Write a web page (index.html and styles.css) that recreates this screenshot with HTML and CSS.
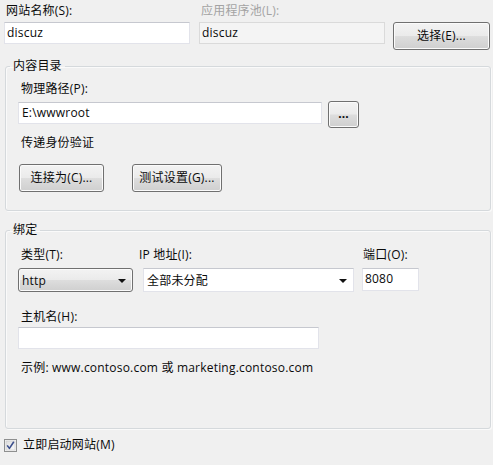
FILE: index.html
```html
<!DOCTYPE html>
<html lang="zh-CN">
<head>
<meta charset="utf-8">
<title>添加网站</title>
<link rel="stylesheet" href="styles.css">
</head>
<body>
<div class="window">
  <div class="toprow">
    <div class="field name-field">
      <div class="lbl">网站名称(S):</div>
      <div class="input">discuz</div>
    </div>
    <div class="field pool-field">
      <div class="lbl lbl-disabled">应用程序池(L):</div>
      <div class="input input-disabled">discuz</div>
    </div>
    <button class="btn btn-select">选择(E)...</button>
  </div>

  <fieldset class="group group-content">
    <legend>内容目录</legend>
    <div class="lbl lbl-path">物理路径(P):</div>
    <div class="path-row">
      <div class="input input-path">E:\wwwroot</div>
      <button class="btn btn-dots">...</button>
    </div>
    <div class="lbl lbl-auth">传递身份验证</div>
    <div class="btn-row">
      <button class="btn btn-connect">连接为(C)...</button>
      <button class="btn btn-test">测试设置(G)...</button>
    </div>
  </fieldset>

  <fieldset class="group group-binding">
    <legend>绑定</legend>
    <div class="bind-grid">
      <div class="lbl lbl-type">类型(T):</div>
      <div class="lbl lbl-ip">IP 地址(I):</div>
      <div class="lbl lbl-port">端口(O):</div>
      <div class="dropdown dropdown-type"><span>http</span><span class="arrow"></span></div>
      <div class="dropdown dropdown-ip"><span>全部未分配</span><span class="arrow"></span></div>
      <div class="input input-port">8080</div>
    </div>
    <div class="lbl lbl-host">主机名(H):</div>
    <div class="input input-host"></div>
    <div class="lbl lbl-example">示例: www.contoso.com 或 marketing.contoso.com</div>
  </fieldset>

  <div class="check-row">
    <svg class="checkbox" width="13" height="13" viewBox="0 0 13 13">
      <defs>
        <linearGradient id="cbg" x1="0" y1="0" x2="1" y2="1">
          <stop offset="0" stop-color="#dcdcdc"/>
          <stop offset="1" stop-color="#fbfbfb"/>
        </linearGradient>
      </defs>
      <rect x="0.5" y="0.5" width="12" height="12" fill="#f4f4f4" stroke="#8e8f8f"/>
      <rect x="2" y="2" width="9" height="9" fill="url(#cbg)" stroke="#c8c8c8" stroke-width="0.6"/>
      <path d="M3.2 6.4 L5.4 9.4 L9.8 2.8" fill="none" stroke="#3c4f8c" stroke-width="1.6" stroke-linejoin="round"/>
    </svg>
    <span class="check-label">立即启动网站(M)</span>
  </div>
</div>
</body>
</html>
```

FILE: styles.css
```css
html, body {
  margin: 0;
  padding: 0;
  background: #ffffff;
}

body {
  font-family: "Open Sans", "Noto Sans CJK SC", sans-serif;
  font-size: 12px;
  letter-spacing: 0.2px;
  color: #0a0a0a;
}

.window {
  width: 493px;
  height: 465px;
  background: #f0f0f0;
  box-sizing: border-box;
  overflow: hidden;
}

.lbl {
  line-height: 16px;
  height: 16px;
  white-space: nowrap;
}

.lbl-disabled {
  color: #a3a3a3;
}

/* Top row */
.toprow {
  display: flex;
  align-items: flex-start;
  padding: 3px 0 0 4px;
}

.field {
  display: flex;
  flex-direction: column;
}

.field .lbl {
  padding-left: 2px;
  margin-bottom: 3px;
}

.input {
  box-sizing: border-box;
  height: 22px;
  line-height: 20px;
  padding-left: 2px;
  background: #ffffff;
  border: 1px solid #e2e3ea;
  border-top-color: #c6c8cf;
  white-space: nowrap;
}

.name-field .input {
  width: 186px;
}

.pool-field {
  margin-left: 9px;
}

.pool-field .input {
  width: 186px;
}

.input-disabled {
  background: #f4f4f4;
  border-color: #dadada;
}

.btn {
  box-sizing: border-box;
  border: 1px solid #707070;
  border-radius: 3px;
  background: linear-gradient(#f3f3f3 0%, #ebebeb 48%, #dddddd 52%, #cfcfcf 100%);
  box-shadow: inset 0 0 0 1px #fbfbfb;
  font-family: inherit;
  font-size: 12px;
  letter-spacing: 0.2px;
  color: #0a0a0a;
  padding: 0;
  line-height: 16px;
  cursor: default;
}

.btn-select {
  margin-top: 19px;
  margin-left: 8px;
  width: 97px;
  height: 28px;
}

/* Group boxes */
.group {
  margin: 0 0 0 5px;
  width: 486px;
  box-sizing: border-box;
  border: 1px solid #d5d9dc;
  border-radius: 3px;
  box-shadow: inset 1px 1px 0 #fafafa, 1px 1px 0 #fafafa;
  padding: 0 12px;
  min-width: 0;
}

.group legend {
  margin-left: -8px;
  padding: 0 3px;
  line-height: 16px;
  height: 16px;
}

.group-content {
  margin-top: 8px;
  padding-bottom: 18px;
}

.lbl-path {
  margin-top: 7px;
  padding-left: 3px;
}

.path-row {
  display: flex;
  align-items: flex-start;
  gap: 6px;
  margin-top: 5px;
  height: 26px;
}

.input-path {
  width: 304px;
  padding-left: 3px;
}

.btn-dots {
  width: 31px;
  height: 27px;
  margin-top: -1px;
  font-weight: bold;
  letter-spacing: 0;
  line-height: 10px;
  padding-bottom: 2px;
}

.lbl-auth {
  margin-top: 7px;
  padding-left: 3px;
}

.btn-row {
  display: flex;
  gap: 28px;
  margin-top: 13px;
  padding-left: 1px;
}

.btn-connect {
  width: 85px;
  height: 28px;
}

.btn-test {
  width: 90px;
  height: 28px;
}

.group-binding {
  margin-top: 11px;
  padding-bottom: 52px;
}

.bind-grid {
  display: grid;
  grid-template-columns: 125px 219px 57px;
  row-gap: 5px;
  margin-top: 9px;
}

.lbl-type {
  padding-left: 3px;
}

.lbl-ip {
  margin-left: -4px;
}

.lbl-port {
  padding-left: 1px;
}

.dropdown {
  box-sizing: border-box;
  height: 24px;
  display: flex;
  align-items: center;
  justify-content: space-between;
  padding: 0 6px 0 3px;
}

.dropdown-type {
  width: 115px;
  border: 1px solid #707070;
  border-radius: 3px;
  background: linear-gradient(#f3f3f3 0%, #ebebeb 48%, #dddddd 52%, #cfcfcf 100%);
  box-shadow: inset 0 0 0 1px #fbfbfb;
}

.dropdown-ip {
  width: 211px;
  background: #ffffff;
  border: 1px solid #e2e3ea;
  border-top-color: #c6c8cf;
}

.arrow {
  width: 0;
  height: 0;
  border-left: 4px solid transparent;
  border-right: 4px solid transparent;
  border-top: 4px solid #111111;
  margin-top: 2px;
}

.input-port {
  height: 23px;
  width: 57px;
  padding-left: 2px;
}

.lbl-host {
  margin-top: 17px;
  padding-left: 3px;
}

.input-host {
  margin-top: 2px;
  width: 301px;
}

.lbl-example {
  margin-top: 11px;
  padding-left: 3px;
}

/* Checkbox row */
.check-row {
  display: flex;
  align-items: center;
  gap: 6px;
  margin-top: 8px;
  padding-left: 4px;
  height: 16px;
  line-height: 16px;
}

.checkbox {
  display: block;
  flex: none;
}
```
